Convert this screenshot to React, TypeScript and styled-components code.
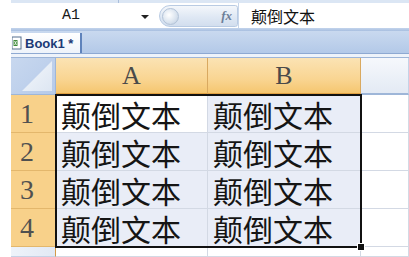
import React from 'react';
import styled, { createGlobalStyle } from 'styled-components';

const GlobalStyle = createGlobalStyle`
  html, body {
    margin: 0;
    padding: 0;
    background: #ffffff;
  }
  body {
    font-family: "Liberation Sans", Arial, sans-serif;
  }
`;

const Window = styled.div`
  width: 409px;
  height: 257px;
  overflow: hidden;
  padding-left: 11px;
  box-sizing: border-box;
  display: flex;
  flex-direction: column;
  background: #ffffff;
`;

const TopStrip = styled.div`
  height: 3px;
  flex: none;
  background: linear-gradient(to right, #dbe6f4 0 107px, #a9bedc 107px 108px, #dbe6f4 108px);
`;

const FormulaBar = styled.div`
  height: 25px;
  flex: none;
  display: flex;
  align-items: stretch;
  background: #ffffff;
`;

const NameBox = styled.div`
  width: 120px;
  display: flex;
  align-items: center;
  justify-content: center;
  font-family: "Liberation Mono", "DejaVu Sans Mono", monospace;
  font-size: 15px;
  color: #1a1a1a;
`;

const DropArrow = styled.div`
  width: 28px;
  display: flex;
  align-items: center;
  justify-content: center;
  &::after {
    content: '';
    border-left: 4px solid transparent;
    border-right: 4px solid transparent;
    border-top: 4px solid #222;
    margin-top: 2px;
  }
`;

const Capsule = styled.div`
  width: 79px;
  margin: 2px 0 1px;
  border-radius: 12px 3px 3px 12px;
  background: linear-gradient(to bottom, #f4f7fb, #dfe8f4 55%, #d2deee);
  border: 1px solid #b9cbe3;
  display: flex;
  align-items: center;
  justify-content: space-between;
  padding: 0 5px 0 2px;
  box-sizing: border-box;
`;

const Knob = styled.span`
  width: 17px;
  height: 17px;
  border-radius: 50%;
  background: radial-gradient(circle at 40% 40%, #ffffff, #d8e2ee 60%, #b8c7da);
  border: 1px solid #b3c3d8;
  box-sizing: border-box;
`;

const Fx = styled.span`
  font-family: "Liberation Serif", serif;
  font-style: italic;
  font-weight: bold;
  font-size: 13px;
  color: #6d7f99;
`;

const FormulaInput = styled.div`
  flex: 1;
  display: flex;
  align-items: center;
  padding-left: 12px;
  border-left: 1px solid #c8d6ea;
  font-family: "Noto Sans CJK SC", sans-serif;
  font-size: 16px;
  color: #111;
`;

const Band = styled.div`
  height: 3px;
  flex: none;
  background: linear-gradient(to bottom, #c3d4ec, #a8bfe0);
`;

const TabRow = styled.div`
  height: 22px;
  flex: none;
  display: flex;
  align-items: flex-end;
  background: linear-gradient(to bottom, #c9d9ef, #b3c9e8);
  border-bottom: 1px solid #8ea9d2;
`;

const Tab = styled.div`
  height: 20px;
  width: 71px;
  box-sizing: border-box;
  display: flex;
  align-items: center;
  gap: 3px;
  padding-left: 1px;
  background: linear-gradient(to bottom, #ffffff, #eef3fa);
  border-right: 2px solid #5f83bb;
  font-size: 13px;
  font-weight: bold;
  color: #1c3b77;
`;

const Gap = styled.div`
  height: 3px;
  flex: none;
  background: #eef3fa;
  border-bottom: 1px solid #9db5d8;
`;

const Sheet = styled.div`
  position: relative;
  flex: 1;
  display: grid;
  grid-template-columns: 45px 152px 153px 1fr;
  grid-template-rows: 37px repeat(4, 38px) 1fr;
`;

const Corner = styled.div`
  background: linear-gradient(135deg, #c8d8ef 0%, #b6cae9 100%);
  border-right: 1px solid #9eb6d8;
  border-bottom: 1px solid #9eb6d8;
  position: relative;
  overflow: hidden;
  &::after {
    content: '';
    position: absolute;
    right: 3px;
    bottom: 3px;
    width: 30px;
    height: 30px;
    background: linear-gradient(135deg, #f4f7fb, #dde6f2);
    clip-path: polygon(100% 0, 100% 100%, 0 100%);
  }
`;

const ColHead = styled.div<{ $active?: boolean }>`
  display: flex;
  align-items: center;
  justify-content: center;
  font-family: "Liberation Serif", "DejaVu Serif", serif;
  font-size: 26px;
  color: #4a4a4a;
  background: ${p => p.$active
    ? 'linear-gradient(to bottom, #fbe3b4, #f9d592 60%, #f5c66f)'
    : 'linear-gradient(to bottom, #f6f8fc, #e3eaf4)'};
  border-right: 1px solid ${p => p.$active ? '#d9a960' : '#c5d2e6'};
  border-bottom: 2px solid ${p => p.$active ? '#e0a041' : '#9eb6d8'};
  box-sizing: border-box;
`;

const RowHead = styled.div<{ $active?: boolean }>`
  display: flex;
  align-items: center;
  padding-left: 9px;
  font-family: "Liberation Serif", "DejaVu Serif", serif;
  font-size: 28px;
  color: #505050;
  background: ${p => p.$active ? '#f8d18a' : 'linear-gradient(to right, #eef3fa, #e2e9f4)'};
  border-bottom: 1px solid ${p => p.$active ? '#e3b76c' : '#c5d2e6'};
  border-right: 1px solid #d49a48;
  box-sizing: border-box;
`;

const Cell = styled.div<{ $active?: boolean; $filled?: boolean }>`
  display: flex;
  align-items: flex-end;
  padding: 0 0 2px 5px;
  font-family: "Noto Sans CJK SC", sans-serif;
  font-size: 30px;
  line-height: 31px;
  color: #151515;
  background: ${p => p.$active ? '#ffffff' : p.$filled ? '#e9edf7' : '#ffffff'};
  border-right: 1px solid #d3d9e4;
  border-bottom: 1px solid #d3d9e4;
  box-sizing: border-box;
  white-space: nowrap;
`;

const Selection = styled.div`
  position: absolute;
  left: 44px;
  top: 36px;
  width: 307px;
  height: 154px;
  border: 2px solid #111;
  box-sizing: border-box;
  pointer-events: none;
`;

const FillHandle = styled.div`
  position: absolute;
  right: -5px;
  bottom: -5px;
  width: 6px;
  height: 6px;
  background: #111;
  border: 1px solid #fff;
`;

const SheetIcon = () => (
  <svg width="10" height="14" viewBox="0 0 10 14">
    <rect x="0" y="1" width="9" height="12" fill="#ffffff" stroke="#56718f" strokeWidth="1" />
    <rect x="1.5" y="4" width="4" height="6" fill="#3f8a3a" />
    <path d="M2.5 5 L4.5 9 M4.5 5 L2.5 9" stroke="#ffffff" strokeWidth="0.8" />
  </svg>
);

const rows = [1, 2, 3, 4];
const text = '颠倒文本';

export default function App() {
  return (
    <>
      <GlobalStyle />
      <Window>
        <TopStrip />
        <FormulaBar>
          <NameBox>A1</NameBox>
          <DropArrow />
          <Capsule>
            <Knob />
            <Fx>fx</Fx>
          </Capsule>
          <FormulaInput>{text}</FormulaInput>
        </FormulaBar>
        <Band />
        <TabRow>
          <Tab>
            <SheetIcon />
            Book1 *
          </Tab>
        </TabRow>
        <Gap />
        <Sheet>
          <Corner />
          <ColHead $active>A</ColHead>
          <ColHead $active>B</ColHead>
          <ColHead />
          {rows.map(r => (
            <React.Fragment key={r}>
              <RowHead $active>{r}</RowHead>
              <Cell $active={r === 1} $filled>{text}</Cell>
              <Cell $filled>{text}</Cell>
              <Cell />
            </React.Fragment>
          ))}
          <RowHead />
          <Cell />
          <Cell />
          <Cell />
          <Selection>
            <FillHandle />
          </Selection>
        </Sheet>
      </Window>
    </>
  );
}
